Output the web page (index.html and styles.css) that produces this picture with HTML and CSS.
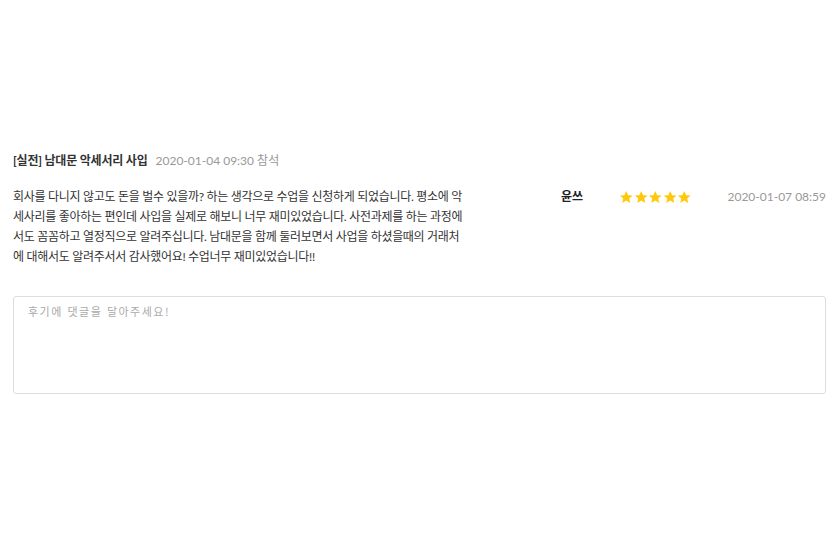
FILE: index.html
```html
<!DOCTYPE html>
<html lang="ko">
<head>
<meta charset="utf-8">
<link rel="stylesheet" href="styles.css">
</head>
<body>
<div class="page">
  <div class="head">
    <span class="title">[실전] 남대문 악세서리 사입</span>
    <span class="meta">2020-01-04 09:30 참석</span>
  </div>
  <div class="review">
    <p class="text">회사를 다니지 않고도 돈을 벌수 있을까? 하는 생각으로 수업을 신청하게 되었습니다. 평소에 악세사리를 좋아하는 편인데 사입을 실제로 해보니 너무 재미있었습니다. 사전과제를 하는 과정에서도 꼼꼼하고 열정직으로 알려주십니다. 남대문을 함께 둘러보면서 사업을 하셨을때의 거래처에 대해서도 알려주서서 감사했어요! 수업너무 재미있었습니다!!</p>
    <div class="name">윤쓰</div>
    <div class="stars">
      <svg viewBox="0 0 24 24"><path d="M12 1.5l3.1 7 7.4.6-5.6 4.9 1.7 7.4L12 17.5l-6.6 3.9 1.7-7.4-5.6-4.9 7.4-.6z"/></svg>
      <svg viewBox="0 0 24 24"><path d="M12 1.5l3.1 7 7.4.6-5.6 4.9 1.7 7.4L12 17.5l-6.6 3.9 1.7-7.4-5.6-4.9 7.4-.6z"/></svg>
      <svg viewBox="0 0 24 24"><path d="M12 1.5l3.1 7 7.4.6-5.6 4.9 1.7 7.4L12 17.5l-6.6 3.9 1.7-7.4-5.6-4.9 7.4-.6z"/></svg>
      <svg viewBox="0 0 24 24"><path d="M12 1.5l3.1 7 7.4.6-5.6 4.9 1.7 7.4L12 17.5l-6.6 3.9 1.7-7.4-5.6-4.9 7.4-.6z"/></svg>
      <svg viewBox="0 0 24 24"><path d="M12 1.5l3.1 7 7.4.6-5.6 4.9 1.7 7.4L12 17.5l-6.6 3.9 1.7-7.4-5.6-4.9 7.4-.6z"/></svg>
    </div>
    <div class="date">2020-01-07 08:59</div>
  </div>
  <textarea class="comment" placeholder="후기에 댓글을 달아주세요!"></textarea>
</div>
</body>
</html>
```
FILE: styles.css
```css
html, body {
  margin: 0;
  padding: 0;
  background: #fff;
}
body {
  font-family: Lato, "Noto Sans CJK KR", sans-serif;
  font-size: 12px;
  color: #333;
}
.page {
  padding: 151px 14px 0 13px;
}
.head {
  display: flex;
  align-items: baseline;
  gap: 8px;
  height: 20px;
  line-height: 20px;
}
.title {
  font-weight: bold;
  color: #333;
  letter-spacing: -0.2px;
}
.meta {
  color: #999;
}
.review {
  display: flex;
  align-items: flex-start;
  margin-top: 16px;
}
.text {
  margin: 0;
  width: 452px;
  line-height: 20px;
  color: #333;
  letter-spacing: -0.3px;
  word-break: break-all;
}
.name {
  margin-left: 96px;
  width: 58px;
  font-weight: bold;
  color: #222;
  line-height: 20px;
}
.stars {
  display: flex;
  gap: 0;
  height: 20px;
  align-items: center;
}
.stars svg {
  width: 14.5px;
  height: 14.5px;
  fill: #ffc80a;
}
.date {
  margin-left: auto;
  color: #999;
  line-height: 20px;
}
.comment {
  display: block;
  box-sizing: border-box;
  width: 813px;
  height: 98px;
  margin-top: 29px;
  padding: 6px 14px;
  border: 1px solid #ddd;
  border-radius: 3px;
  resize: none;
  font-family: "Noto Sans CJK KR", sans-serif;
  font-size: 11px;
  letter-spacing: 1.5px;
  outline: none;
}
.comment::placeholder {
  color: #aaa;
}
```
